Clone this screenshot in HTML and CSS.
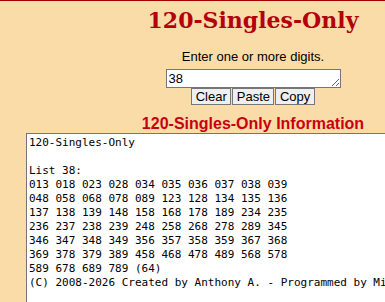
FILE: index.html
```html
<!DOCTYPE html>
<html lang="en">
<head>
<meta charset="utf-8">
<title>120-Singles-Only</title>
<link rel="stylesheet" href="styles.css">
</head>
<body>
<div class="page">
  <h1 class="title">120-Singles-Only</h1>
  <p class="prompt">Enter one or more digits.</p>
  <textarea class="digits">38</textarea>
  <div class="buttons">
    <button class="btn">Clear</button>
    <button class="btn">Paste</button>
    <button class="btn">Copy</button>
  </div>
  <h2 class="info">120-Singles-Only Information</h2>
  <textarea class="output" wrap="off" readonly>120-Singles-Only

List 38:
013 018 023 028 034 035 036 037 038 039
048 058 068 078 089 123 128 134 135 136
137 138 139 148 158 168 178 189 234 235
236 237 238 239 248 258 268 278 289 345
346 347 348 349 356 357 358 359 367 368
369 378 379 389 458 468 478 489 568 578
589 678 689 789 (64)
(C) 2008-2026 Created by Anthony A. - Programmed by Mi</textarea>
</div>
</body>
</html>
```
FILE: styles.css
```css
html, body {
  overflow: hidden;
}
body {
  margin: 0;
  background: #f9dca8;
  border-top: 1px solid #a00000;
  font-family: "Liberation Sans", Arial, sans-serif;
}
.page {
  margin-left: 26px;
  width: 454px;
  display: flex;
  flex-direction: column;
  align-items: center;
}
.title {
  margin: 6px 0 0;
  font-family: "DejaVu Serif", serif;
  font-weight: bold;
  font-size: 22px;
  line-height: 26px;
  color: #b3000c;
}
.prompt {
  margin: 16px 0 0;
  font-size: 13px;
  line-height: 15px;
  color: #000;
}
.digits {
  display: block;
  box-sizing: border-box;
  margin: 5px 0 0;
  width: 175px;
  height: 19px;
  padding: 2px;
  border: 1px solid #767676;
  background: #fff;
  font-family: "Liberation Sans", Arial, sans-serif;
  font-size: 13px;
  line-height: 13px;
  overflow: hidden;
}
.buttons {
  display: flex;
  gap: 1px;
  margin-top: 0;
}
.btn {
  margin: 0;
  padding: 0 3.5px;
  border: 1px solid #767676;
  border-radius: 0;
  background: #efefef;
  font-family: "Liberation Sans", Arial, sans-serif;
  font-size: 13px;
  line-height: 15px;
  color: #000;
}
.info {
  margin: 10px 0 0;
  font-size: 16px;
  line-height: 18px;
  font-weight: bold;
  color: #c8000f;
}
.output {
  display: block;
  box-sizing: border-box;
  align-self: stretch;
  margin: 0;
  height: 260px;
  padding: 2px;
  border: 1px solid #767676;
  background: #fff;
  font-family: "DejaVu Sans Mono", monospace;
  font-size: 11px;
  line-height: 14px;
  color: #000;
  resize: none;
  overflow: hidden;
  white-space: pre;
}
```
